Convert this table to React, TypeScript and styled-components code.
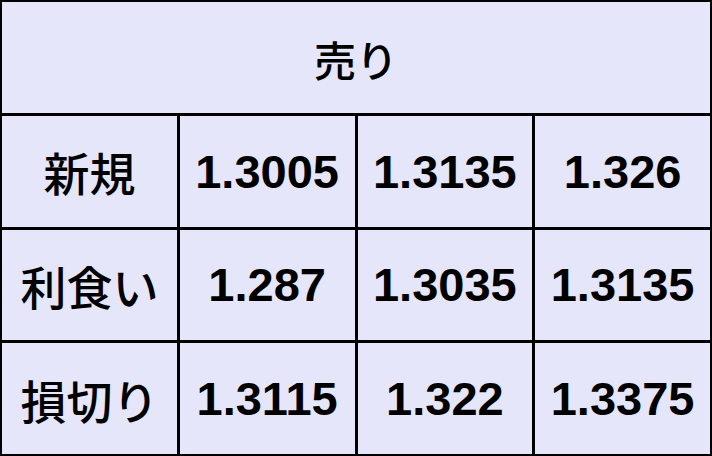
import styled, { createGlobalStyle } from "styled-components";

const GlobalStyle = createGlobalStyle`
	html, body {
		margin: 0;
		padding: 0;
		background: #ffffff;
	}
`;

const Grid = styled.div`
	width: 712px;
	height: 456px;
	box-sizing: border-box;
	padding: 2px;
	display: grid;
	grid-template-columns: repeat(4, 1fr);
	grid-template-rows: repeat(4, 1fr);
	gap: 3px;
	background: #000000;
	font-family: "Liberation Sans", Arial, "Noto Sans CJK JP", sans-serif;
	font-weight: 700;
	color: #000000;
`;

const Cell = styled.div<{ $span?: boolean }>`
	grid-column: ${props => (props.$span ? "1 / -1" : "auto")};
	display: flex;
	justify-content: center;
	align-items: center;
	background: #e6e6fa;
	font-size: 47px;
	line-height: 1;
`;

const Label = styled(Cell)`
	font-family: "Noto Sans CJK JP", sans-serif;
	font-weight: 500;
	font-size: ${props => (props.$span ? "42px" : "46px")};
	padding-top: ${props => (props.$span ? "4px" : "0")};
`;

const rows = [
	{ label: "新規", values: ["1.3005", "1.3135", "1.326"] },
	{ label: "利食い", values: ["1.287", "1.3035", "1.3135"] },
	{ label: "損切り", values: ["1.3115", "1.322", "1.3375"] },
];

function App() {
	return (
		<>
			<GlobalStyle />
			<Grid>
				<Label $span>売り</Label>
				{rows.map(row => (
					<>
						<Label key={row.label}>{row.label}</Label>
						{row.values.map((v, i) => (
							<Cell key={row.label + i}>{v}</Cell>
						))}
					</>
				))}
			</Grid>
		</>
	);
}

export default App;
